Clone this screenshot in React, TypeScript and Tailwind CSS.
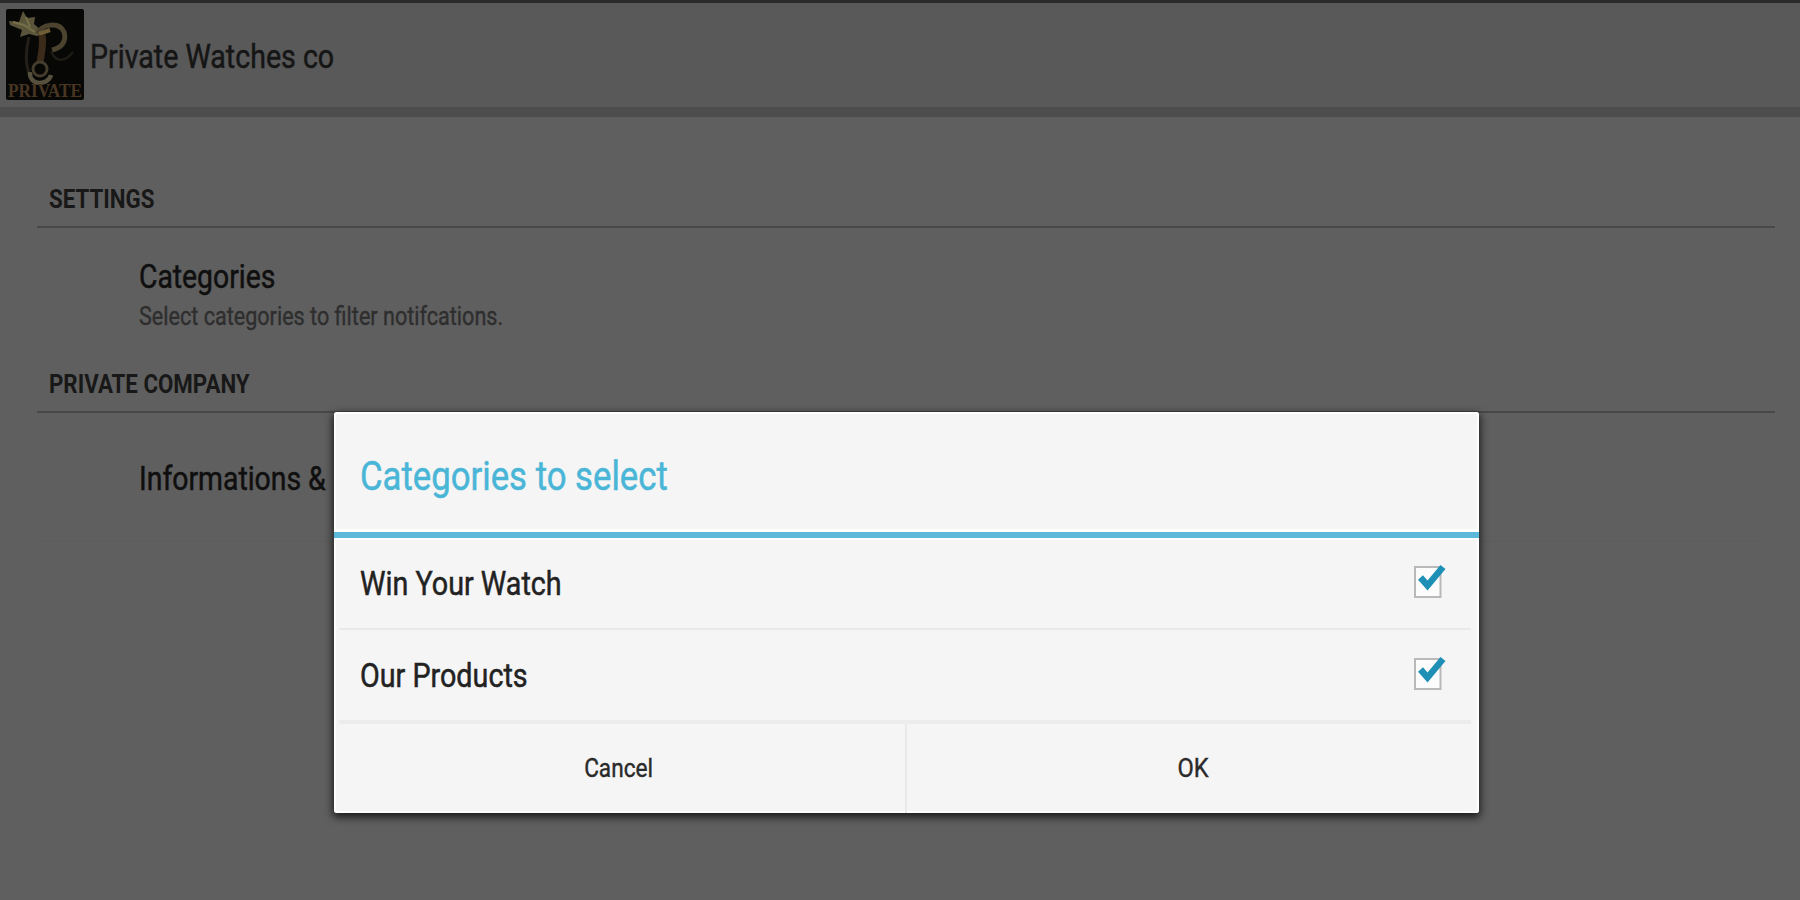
import React from 'react';

interface CategoryRowProps {
  title: string;
  divider?: boolean;
}

function Logo() {
  return (
    <svg viewBox="0 0 78 91" className="h-[91px] w-[78px] shrink-0">
      <rect width="78" height="91" rx="2" fill="#070706" />
      {/* Flower */}
      <path
        d="M17 2 L21 9 L29 8 L28 15 L36 22 L31 27 L23 25 L14 28 L16 21 L4 16 L3 12 L13 13 Z"
        fill="#5a553a"
      />
      <path d="M7 13 L18 16 L33 26 M20 8 L24 18" fill="none" stroke="#777049" strokeWidth="2" />
      {/* Letter ornament */}
      <path d="M31 25 C36 15 53 12 58 23 C61 33 55 39 46 41" fill="none" stroke="#4b432e" strokeWidth="5" />
      <path d="M33 25 L44 21" fill="none" stroke="#6e5d35" strokeWidth="4" />
      <path d="M36 26 C38 36 35 44 34 54" fill="none" stroke="#3c2b1b" strokeWidth="7" />
      <path d="M23 28 C20 40 19 55 23 63" fill="none" stroke="#242019" strokeWidth="3" />
      <path d="M45 42 C50 55 60 52 67 43" fill="none" stroke="#1f1b15" strokeWidth="2.5" />
      <path d="M24 63 C23 77 42 77 45 66" fill="none" stroke="#56503e" strokeWidth="4.5" />
      <circle cx="34" cy="60" r="7" fill="none" stroke="#443c2c" strokeWidth="3" />
      <text
        x="2"
        y="88"
        textLength="74"
        lengthAdjust="spacingAndGlyphs"
        fill="#493622"
        fontFamily="Liberation Serif, serif"
        fontWeight="700"
        fontSize="18"
      >
        PRIVATE
      </text>
    </svg>
  );
}

function CheckBox() {
  return (
    <svg viewBox="0 0 36 36" className="mb-[4px] h-9 w-9 shrink-0">
      <rect x="4" y="4" width="25.5" height="30" fill="#fcfcfc" stroke="#b9b9b9" strokeWidth="2" />
      <path d="M9.5 14.5 L16.5 22.5 L32 4" fill="none" stroke="#1e8fb5" strokeWidth="6.5" />
    </svg>
  );
}

function SectionTitle({ title }: { title: string }) {
  return (
    <div className="ml-[37px] mr-[25px] h-[56px] border-b-2 border-[#484848] pl-3">
      <h2 className="inline-block origin-left scale-x-[0.857] whitespace-nowrap text-[26px] font-bold leading-[54px] text-[#181818]">
        {title}
      </h2>
    </div>
  );
}

function CategoryRow({ title, divider }: CategoryRowProps) {
  return (
    <li className="pl-[5px] pr-[8px]">
      <div className="flex h-[90px] items-center justify-between pl-[21px] pr-[24px]">
        <span className="mt-[2px] origin-left scale-x-[0.87] whitespace-nowrap text-[33px] text-[#222] [-webkit-text-stroke:0.5px]">
          {title}
        </span>
        <CheckBox />
      </div>
      {divider && <div className="h-[2px] bg-[#e9e9e9]" />}
    </li>
  );
}

export default function App() {
  return (
    <div className="relative h-[900px] w-full overflow-hidden bg-[#5f5f5f] font-['Roboto',sans-serif]">
      {/* Action bar */}
      <header className="flex h-[117px] items-start border-b-[10px] border-t-[3px] border-b-[#4d4d4d] border-t-[#2a2a2a] bg-[#595959] pl-[6px] pt-[6px]">
        <Logo />
        <h1 className="ml-[6px] mt-[28px] origin-left scale-x-[0.866] whitespace-nowrap text-[33px] leading-[40px] text-[#151515] [-webkit-text-stroke:0.5px]">
          Private Watches co
        </h1>
      </header>

      {/* Preference list */}
      <main className="pt-[55px]">
        <SectionTitle title="SETTINGS" />
        <div className="h-[129px] pl-[139px] pt-[29px]">
          <p className="origin-left scale-x-[0.858] whitespace-nowrap text-[33px] leading-[40px] text-[#0f0f0f] [-webkit-text-stroke:0.5px]">
            Categories
          </p>
          <p className="mt-px origin-left scale-x-[0.83] whitespace-nowrap text-[26px] leading-[36px] text-[#2e2e2e] [-webkit-text-stroke:0.4px]">
            Select categories to filter notifcations.
          </p>
        </div>
        <SectionTitle title="PRIVATE COMPANY" />
        <div className="mx-[37px] h-[129px] border-b border-[#5c5c5c] pl-[102px] pt-[46px]">
          <p className="origin-left scale-x-[0.86] whitespace-nowrap text-[33px] leading-[40px] text-[#0f0f0f] [-webkit-text-stroke:0.5px]">
            Informations &amp;
          </p>
        </div>
      </main>

      {/* Dialog */}
      <div className="absolute left-[334px] top-[412px] h-[401px] w-[1145px] rounded-[3px] bg-[#f5f5f5] shadow-[inset_0_0_0_2px_#fff,0_3px_8px_1px_rgba(0,0,0,0.75)]">
        <div className="h-[126px] border-b-[6px] border-[#5cb9da] pl-[26px] pt-[38px] shadow-[inset_0_-3px_0_#fff,0_2px_0_#fff]">
          <h2 className="origin-left scale-x-[0.857] whitespace-nowrap text-[40.5px] leading-[52px] text-[#4ab6d7] [-webkit-text-stroke:0.5px]">
            Categories to select
          </h2>
        </div>
        <ul>
          <CategoryRow title="Win Your Watch" divider />
          <CategoryRow title="Our Products" />
        </ul>
        <div className="ml-[5px] mr-[8px] flex h-[93px] border-t-4 border-[#ececec] text-[26px] text-[#2a2a2a] [-webkit-text-stroke:0.4px]">
          <button className="flex w-[568px] items-center justify-center border-r-2 border-[#e9e9e9] pr-[7px]">
            <span className="scale-x-[0.87]">Cancel</span>
          </button>
          <button className="flex flex-1 items-center justify-center pl-[8px]">
            <span className="scale-x-[0.91]">OK</span>
          </button>
        </div>
      </div>
    </div>
  );
}
